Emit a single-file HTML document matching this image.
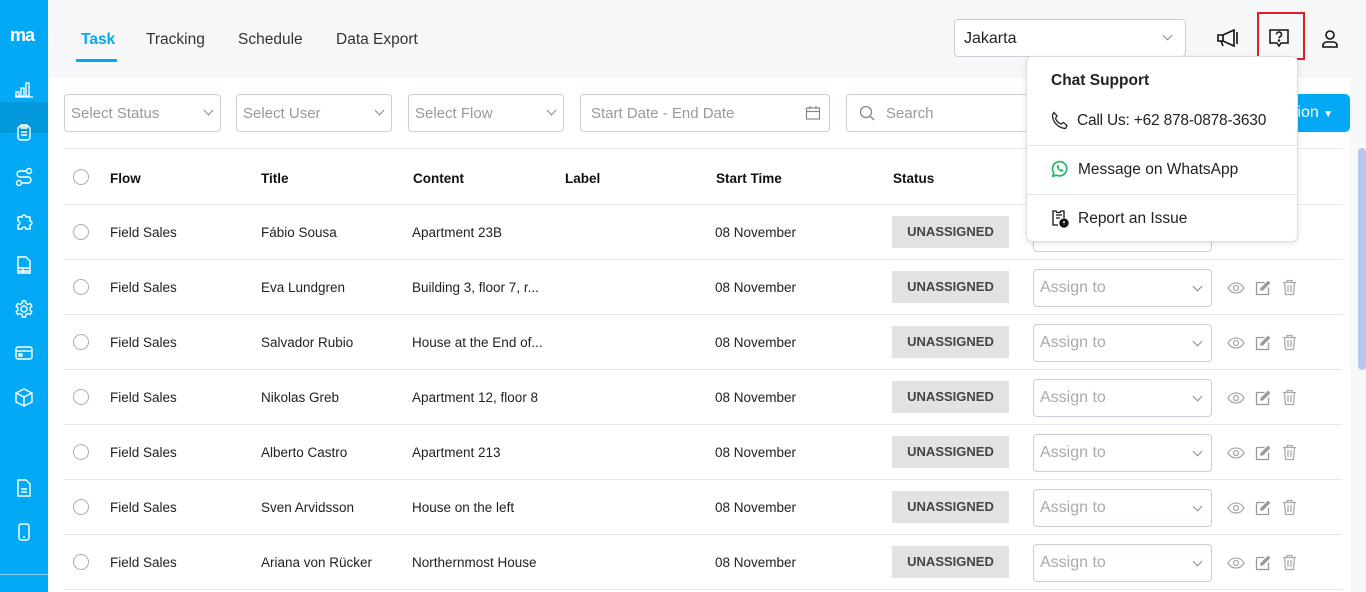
<!DOCTYPE html>
<html><head><meta charset="utf-8"><style>
*{box-sizing:border-box;margin:0;padding:0}
body{width:1366px;height:592px;overflow:hidden;font-family:"Liberation Sans",sans-serif;background:#f7f8fa;position:relative;color:#222}
.sb{position:absolute;left:0;top:0;width:48px;height:592px;background:#03a9f4}
.sb .act{position:absolute;top:102px;left:0;width:48px;height:31px;background:#0398db}
.sb svg{position:absolute;left:14px}
.logo{position:absolute;left:10px;top:25px;color:#fff;font-weight:bold;font-size:18px;letter-spacing:-1px}
.hdr{position:absolute;left:48px;top:0;right:0;height:78px;background:#f6f7f9}
.tab{position:absolute;top:31px;font-size:15.5px;color:#333}
.main{position:absolute;left:48px;top:78px;width:1302px;height:514px;background:#fff}
.inp{position:absolute;top:94px;height:38px;border:1px solid #ccd;border-radius:4px;background:#fff;color:#999;font-size:15px;padding:10px 6px}
.chev{position:absolute;right:8px;top:12px;width:7px;height:7px;border-right:1px solid #888;border-bottom:1px solid #888;transform:rotate(45deg)}
.line{position:absolute;left:64px;width:1278px;height:1px;background:#e3e8ef}
.cell{position:absolute;font-size:13.5px;color:#222}
.th{font-weight:bold;color:#111}
.cb{position:absolute;left:73px;width:16px;height:16px;border:1px solid #aab;border-radius:50%}
.badge{position:absolute;left:892px;width:117px;height:32px;background:#e2e2e2;color:#444;font-weight:bold;font-size:13px;text-align:center;line-height:32px}
.asg{position:absolute;left:1033px;width:179px;height:38px;border:1px solid #ccd;border-radius:4px;color:#aaa;font-size:16px;padding:9px 6px;background:#fff}
.dd{position:absolute;left:1026px;top:56px;width:272px;height:186px;background:#fff;border:1px solid #ddd;border-radius:6px;box-shadow:0 2px 6px rgba(0,0,0,.1)}
.dd div{position:absolute;font-size:15.5px;color:#222}
</style></head><body>
<div class="sb"><div class="logo">ma</div><div class="act"></div>
<svg style="top:80px" width="20" height="18" viewBox="0 0 20 18" fill="none" stroke="#fff" stroke-width="1.3"><rect x="2" y="12" width="3" height="4"/><rect x="7" y="8" width="3" height="8"/><rect x="12" y="3" width="3" height="13"/><path d="M1 17h18"/></svg>
<svg style="top:122px" width="20" height="20" viewBox="0 0 20 20" fill="none" stroke="#fff" stroke-width="1.4"><rect x="4" y="4" width="12" height="14" rx="3"/><path d="M7 3h6v3H7zM7 10h6M7 13h6"/></svg>
<svg style="top:167px" width="20" height="20" viewBox="0 0 20 20" fill="none" stroke="#fff" stroke-width="1.4"><circle cx="15" cy="4" r="2.5"/><circle cx="5" cy="16" r="2.5"/><path d="M12 4H6a3 3 0 0 0 0 6h8a3 3 0 0 1 0 6H8"/></svg>
<svg style="top:211px" width="20" height="20" viewBox="0 0 20 20" fill="none" stroke="#fff" stroke-width="1.4"><path d="M4 6h4a2 2 0 1 1 4 0h4v4a2 2 0 1 1 0 4v4h-4a2 2 0 1 0-4 0H4v-4a2 2 0 1 0 0-4z"/></svg>
<svg style="top:255px" width="20" height="20" viewBox="0 0 20 20" fill="none" stroke="#fff" stroke-width="1.4"><path d="M4 2h8l4 4v12H4zM4 13h12M4 16h12M9 13v5"/></svg>
<svg style="top:299px" width="20" height="20" viewBox="0 0 20 20" fill="none" stroke="#fff" stroke-width="1.4"><circle cx="10" cy="10" r="3"/><path d="M8.5 2h3l.5 2.5 2 1 2.3-1 1.6 2.6-1.8 1.8v2.2l1.8 1.8-1.6 2.6-2.3-1-2 1-.5 2.5h-3L8 15.5l-2-1-2.3 1-1.6-2.6 1.8-1.8V8.9L2.1 7.1 3.7 4.5l2.3 1 2-1z"/></svg>
<svg style="top:343px" width="20" height="20" viewBox="0 0 20 20" fill="none" stroke="#fff" stroke-width="1.4"><rect x="2" y="4" width="16" height="12" rx="2"/><path d="M2 8h16"/><rect x="5" y="11" width="3" height="2" fill="#fff"/></svg>
<svg style="top:387px" width="20" height="20" viewBox="0 0 20 20" fill="none" stroke="#fff" stroke-width="1.4"><path d="M10 2l8 4v9l-8 4-8-4V6zM2 6l8 4 8-4M10 10v9"/></svg>
<svg style="top:478px" width="20" height="20" viewBox="0 0 20 20" fill="none" stroke="#fff" stroke-width="1.4"><path d="M4 2h8l4 4v12H4zM7 11h6M7 14h6"/></svg>
<svg style="top:522px" width="20" height="20" viewBox="0 0 20 20" fill="none" stroke="#fff" stroke-width="1.4"><rect x="5" y="2" width="10" height="16" rx="2"/><path d="M9 15h2"/></svg>
<div style="position:absolute;top:574px;left:0;width:48px;height:1px;background:#7fd0f5"></div>
</div>
<div class="hdr">
<div class="tab" style="left:33px;color:#03a9f4;font-weight:bold">Task</div>
<div style="position:absolute;left:28px;top:59px;width:41px;height:3px;background:#03a9f4"></div>
<div class="tab" style="left:98px">Tracking</div>
<div class="tab" style="left:190px">Schedule</div>
<div class="tab" style="left:288px">Data Export</div>
<div style="position:absolute;left:906px;top:19px;width:232px;height:38px;border:1px solid #ccd;border-radius:4px;background:#fff;font-size:16px;padding:10px 9px;color:#222">Jakarta<span class="chev" style="right:14px"></span></div>
<svg style="position:absolute;left:1168px;top:28px" width="24" height="20" viewBox="0 0 24 20" fill="none" stroke="#111" stroke-width="1.6"><path d="M2 7h5l11-5v16L7 13H2zM7 7v6M5 13l2 5M21 4v12"/></svg>
<div style="position:absolute;left:1209px;top:12px;width:48px;height:48px;border:2px solid #e02020"></div>
<svg style="position:absolute;left:1220px;top:28px" width="22" height="20" viewBox="0 0 22 20" fill="none" stroke="#111" stroke-width="1.5"><path d="M2 2h18v13h-7l-2 3-2-3H2z"/><path d="M8.5 6.5a2.5 2.5 0 1 1 3.5 2.3c-.7.3-1 .8-1 1.5"/><circle cx="11" cy="12.5" r=".5"/></svg>
<svg style="position:absolute;left:1272px;top:29px" width="20" height="20" viewBox="0 0 20 20" fill="none" stroke="#111" stroke-width="1.6"><circle cx="10" cy="6" r="4"/><path d="M3 18v-2a4 4 0 0 1 4-3h6a4 4 0 0 1 4 3v2z"/></svg>
</div>
<div class="main"></div>
<div class="inp" style="left:64px;width:157px">Select Status<span class="chev"></span></div>
<div class="inp" style="left:236px;width:156px">Select User<span class="chev"></span></div>
<div class="inp" style="left:408px;width:156px">Select Flow<span class="chev"></span></div>
<div class="inp" style="left:580px;width:250px;padding-left:10px">Start Date - End Date
<svg style="position:absolute;right:8px;top:10px" width="16" height="16" viewBox="0 0 16 16" fill="none" stroke="#888" stroke-width="1.2"><rect x="1.5" y="3" width="13" height="11"/><path d="M1.5 6.5h13M5 1v3M11 1v3"/></svg></div>
<div class="inp" style="left:846px;width:190px;padding-left:39px">Search
<svg style="position:absolute;left:12px;top:10px" width="16" height="16" viewBox="0 0 16 16" fill="none" stroke="#888" stroke-width="1.3"><circle cx="7" cy="7" r="5.5"/><path d="M11 11l4 4"/></svg></div>
<div style="position:absolute;left:1260px;top:94px;width:90px;height:38px;background:#03a9f4;border-radius:5px;color:#fff;font-size:16px;padding:10px 0 0 33px">tion <span style="font-size:10px">▼</span></div>
<div class="line" style="top:148px"></div>
<div class="cb" style="top:169px"></div>
<div class="cell th" style="left:110px;top:171px">Flow</div>
<div class="cell th" style="left:261px;top:171px">Title</div>
<div class="cell th" style="left:413px;top:171px">Content</div>
<div class="cell th" style="left:565px;top:171px">Label</div>
<div class="cell th" style="left:716px;top:171px">Start Time</div>
<div class="cell th" style="left:893px;top:171px">Status</div>
<div id="rows"></div>
<script>
var d=[["Fábio Sousa","Apartment 23B"],["Eva Lundgren","Building 3, floor 7, r..."],["Salvador Rubio","House at the End of..."],["Nikolas Greb","Apartment 12, floor 8"],["Alberto Castro","Apartment 213"],["Sven Arvidsson","House on the left"],["Ariana von Rücker","Northernmost House"]];
var h="";d.forEach(function(r,i){var y=204+55*i;
h+='<div class="line" style="top:'+y+'px"></div><div class="cb" style="top:'+(y+20)+'px"></div>'+
'<div class="cell" style="left:110px;top:'+(y+21)+'px">Field Sales</div><div class="cell" style="left:261px;top:'+(y+21)+'px">'+r[0]+'</div>'+
'<div class="cell" style="left:412px;top:'+(y+21)+'px">'+r[1]+'</div><div class="cell" style="left:715px;top:'+(y+21)+'px">08 November</div>'+
'<div class="badge" style="top:'+(y+12)+'px">UNASSIGNED</div><div class="asg" style="top:'+(y+10)+'px">Assign to<span class="chev" style="right:10px;top:13px"></span></div>'+
'<svg style="position:absolute;left:1227px;top:'+(y+23)+'px" width="18" height="12" viewBox="0 0 18 12" fill="none" stroke="#aaa" stroke-width="1.3"><path d="M1 6c2-3.5 5-5 8-5s6 1.5 8 5c-2 3.5-5 5-8 5S3 9.5 1 6z"/><circle cx="9" cy="6" r="2.5"/></svg>'+
'<svg style="position:absolute;left:1255px;top:'+(y+21)+'px" width="16" height="16" viewBox="0 0 16 16" fill="none" stroke="#999" stroke-width="1.3"><path d="M1.5 2.5h8M1.5 2.5v12h12v-7"/><path d="M13 1.5l1.5 1.5-7 7H6V8.5z" fill="#999"/></svg>'+
'<svg style="position:absolute;left:1282px;top:'+(y+20)+'px" width="15" height="17" viewBox="0 0 15 17" fill="none" stroke="#aaa" stroke-width="1.3"><path d="M1 3.5h13M5 3.5V1.5h5v2M2.5 3.5l1 12h8l1-12M6 6v7M9 6v7"/></svg>';});
h+='<div class="line" style="top:589px"></div>';
document.getElementById("rows").innerHTML=h;
</script>
<div style="position:absolute;left:1358px;top:148px;width:8px;height:222px;background:#b7c7ef;border-radius:4px"></div>
<div class="dd">
<div style="left:24px;top:15px;font-weight:bold">Chat Support</div>
<svg style="position:absolute;left:23px;top:54px" width="20" height="20" viewBox="0 0 20 20" fill="none" stroke="#222" stroke-width="1.3"><path d="M4 1.5l3 3.5-1.5 2.5c1 2.5 3 4.5 5.5 5.5L13.5 11.5l3.5 3-1.5 3C8 17 2.5 11 2.5 4z"/></svg>
<div style="left:50px;top:55px;letter-spacing:-0.2px">Call Us: +62 878-0878-3630</div>
<div style="left:0;top:88px;width:270px;height:1px;background:#e3e3e3"></div>
<svg style="position:absolute;left:23px;top:103px" width="19" height="19" viewBox="0 0 20 20" fill="none" stroke="#25b868" stroke-width="1.8"><path d="M3 17l1-3.5A7.5 7.5 0 1 1 7 16z"/><path d="M7.5 6.5c0 3 2.5 5.5 5.5 5.5l1-1.2-1.8-1-1 .8c-1-.5-2-1.5-2.5-2.5l.8-1-1-1.8z" fill="#25b868" stroke-width=".6"/></svg>
<div style="left:51px;top:104px">Message on WhatsApp</div>
<div style="left:0;top:137px;width:270px;height:1px;background:#e3e3e3"></div>
<svg style="position:absolute;left:23px;top:151px" width="20" height="20" viewBox="0 0 20 20" fill="none" stroke="#111" stroke-width="1.3"><path d="M8 17H3V3h3l1 1.5h3L11 3h3v7M6 7h6M6 10h4"/><circle cx="14" cy="15" r="4" fill="#111"/><path d="M14 13v2.3M14 16.8v.3" stroke="#fff" stroke-width="1.4"/></svg>
<div style="left:51px;top:153px">Report an Issue</div>
</div>
</body></html>
